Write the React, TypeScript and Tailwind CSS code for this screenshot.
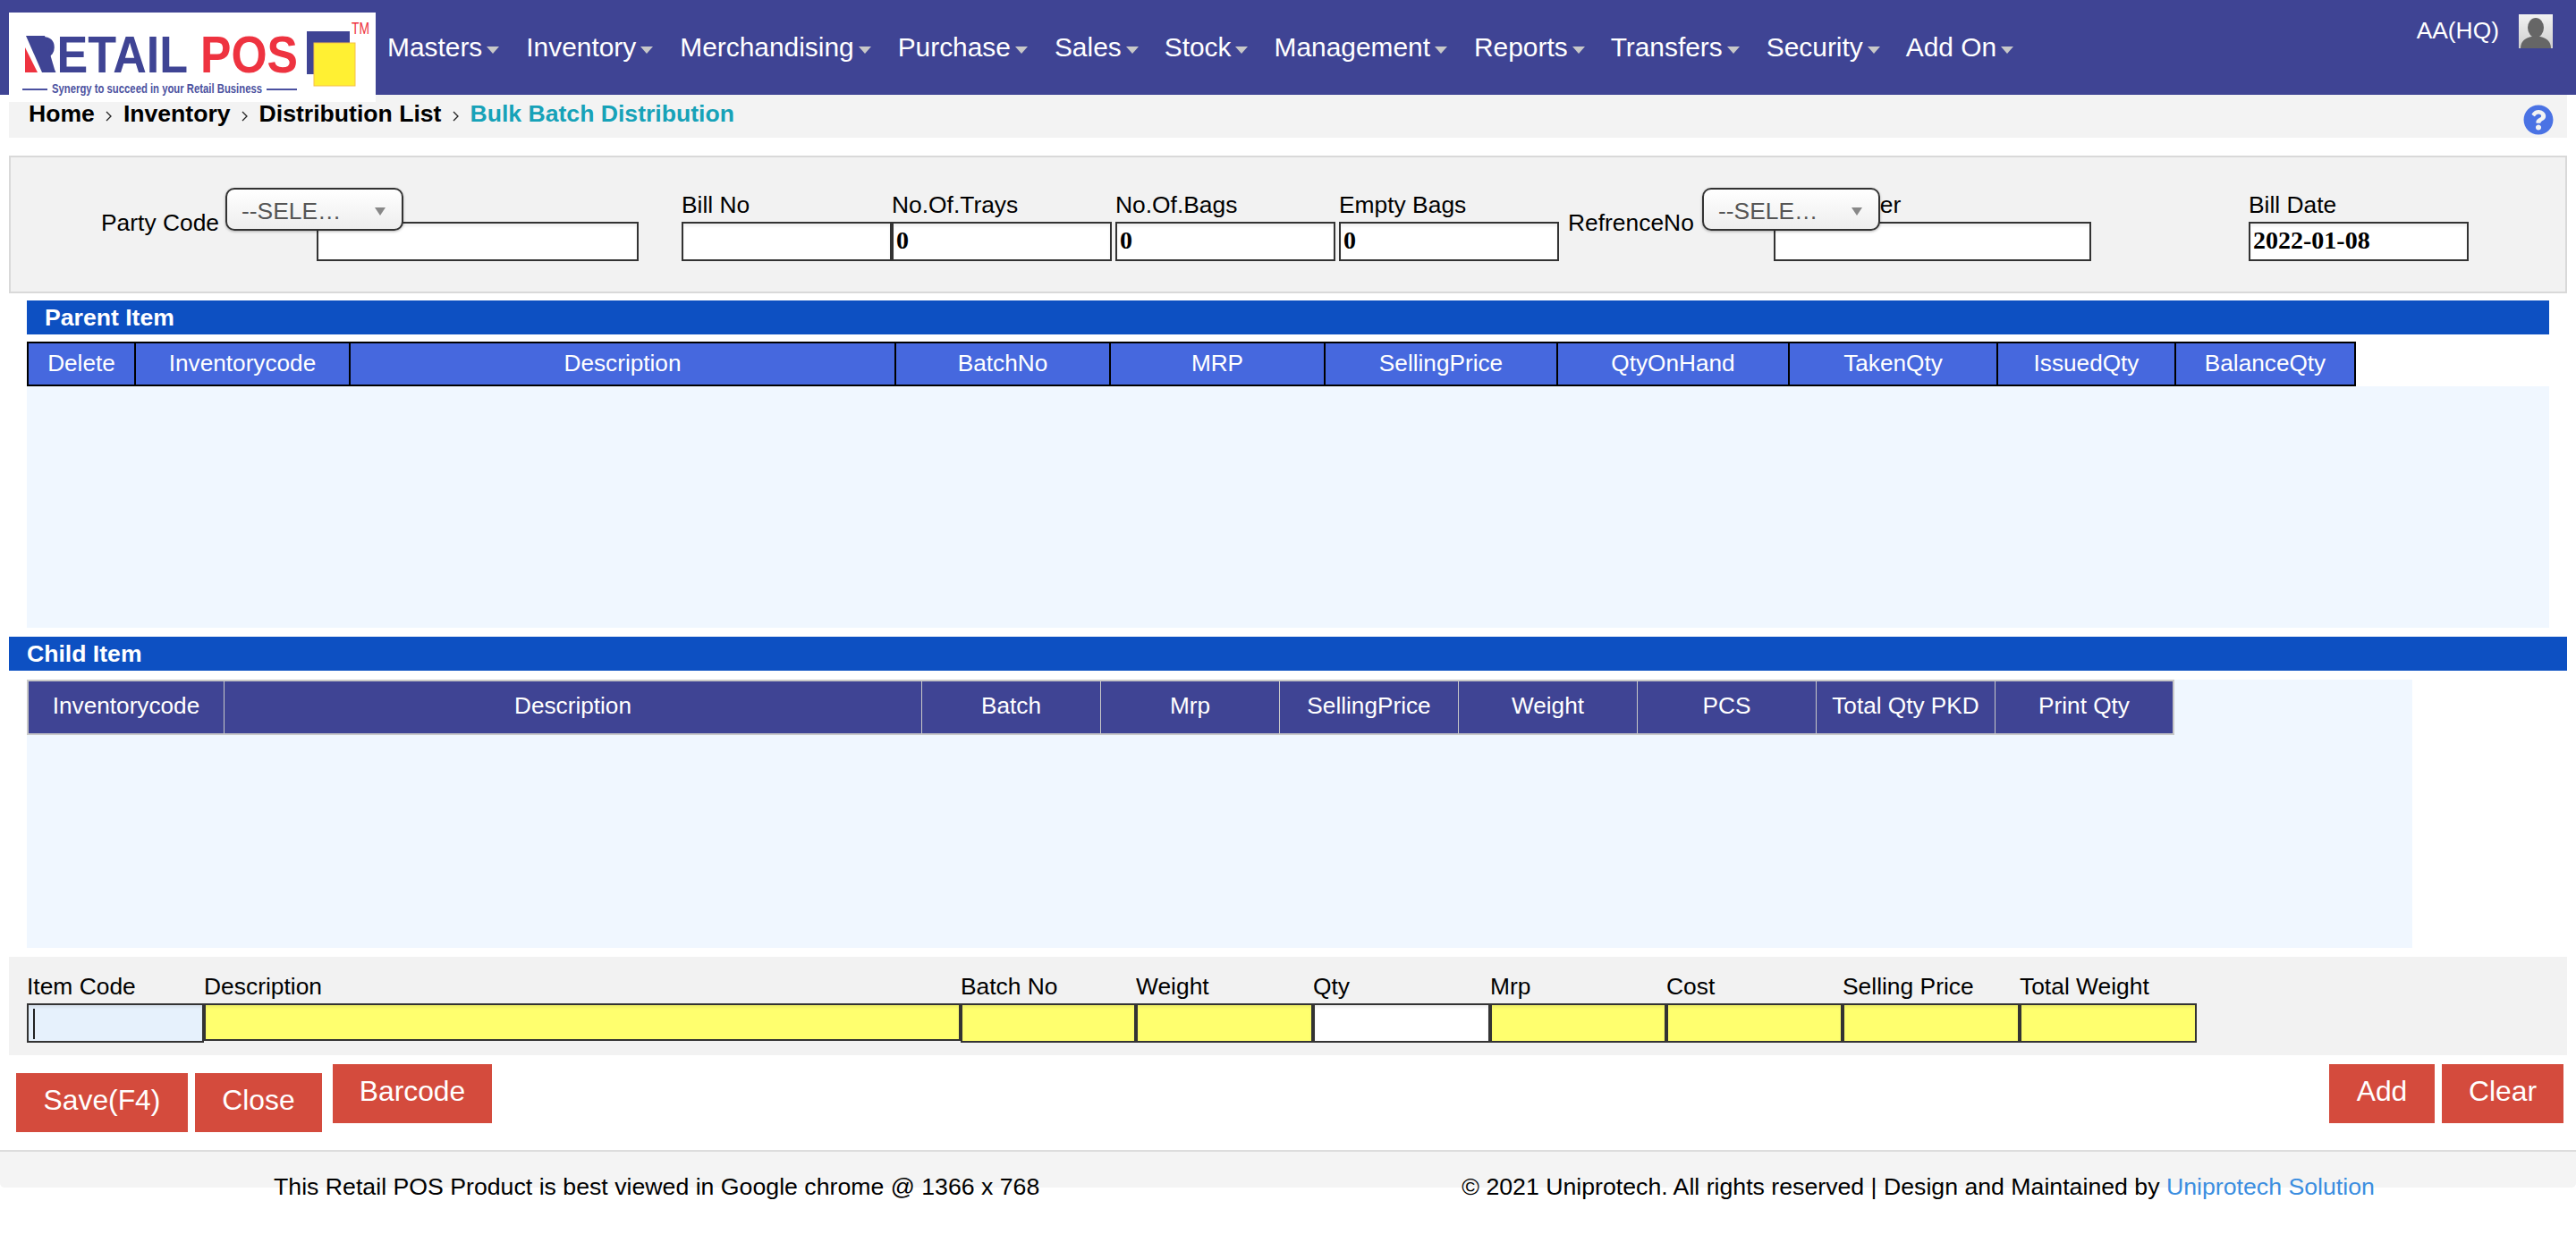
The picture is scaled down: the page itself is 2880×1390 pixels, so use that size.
import { FaQuestionCircle } from "react-icons/fa"

const navItems = [
  { label: "Masters", gap: "mr-[30px]" },
  { label: "Inventory", gap: "mr-[30px]" },
  { label: "Merchandising", gap: "mr-[30px]" },
  { label: "Purchase", gap: "mr-[30px]" },
  { label: "Sales", gap: "mr-[29px]" },
  { label: "Stock", gap: "mr-[29px]" },
  { label: "Management", gap: "mr-[30px]" },
  { label: "Reports", gap: "mr-[29px]" },
  { label: "Transfers", gap: "mr-[30px]" },
  { label: "Security", gap: "mr-[29px]" },
  { label: "Add On", gap: "" },
]

const parentCols = [
  { label: "Delete", w: "w-[118px]" },
  { label: "Inventorycode", w: "w-[240px]" },
  { label: "Description", w: "w-[610px]" },
  { label: "BatchNo", w: "w-[240px]" },
  { label: "MRP", w: "w-[240px]" },
  { label: "SellingPrice", w: "w-[260px]" },
  { label: "QtyOnHand", w: "w-[259px]" },
  { label: "TakenQty", w: "w-[233px]" },
  { label: "IssuedQty", w: "w-[199px]" },
  { label: "BalanceQty", w: "w-[201px]" },
]

const childCols = [
  { label: "Inventorycode", w: "w-[218px]" },
  { label: "Description", w: "w-[780px]" },
  { label: "Batch", w: "w-[200px]" },
  { label: "Mrp", w: "w-[200px]" },
  { label: "SellingPrice", w: "w-[200px]" },
  { label: "Weight", w: "w-[200px]" },
  { label: "PCS", w: "w-[200px]" },
  { label: "Total Qty PKD", w: "w-[200px]" },
  { label: "Print Qty", w: "w-[199px]" },
]

const itemFields = [
  { label: "Batch No", w: "w-[196px]", bg: "bg-[#ffff6e]" },
  { label: "Weight", w: "w-[198px]", bg: "bg-[#ffff6e]" },
  { label: "Qty", w: "w-[198px]", bg: "bg-white" },
  { label: "Mrp", w: "w-[197px]", bg: "bg-[#ffff6e]" },
  { label: "Cost", w: "w-[197px]", bg: "bg-[#ffff6e]" },
  { label: "Selling Price", w: "w-[198px]", bg: "bg-[#ffff6e]" },
  { label: "Total Weight", w: "w-[198px]", bg: "bg-[#ffff6e]" },
]

function Logo() {
  return (
    <div className="mt-[14px] h-[100px] w-[410px] shrink-0 bg-white">
      <svg width="410" height="100" viewBox="0 0 410 100">
        <text x="16" y="67" fontFamily="Liberation Sans" fontWeight="700" fontSize="58" fill="#3f4494" textLength="184" lengthAdjust="spacingAndGlyphs">RETAIL</text>
        {/* the R of the logo has a diagonal stem with a red wedge under it */}
        <polygon points="12,22 38,22 46,68 12,68" fill="#fff" />
        <polygon points="19,26 40,26 52,67 37,67" fill="#3f4494" />
        <polygon points="18,39 18,67 32,67" fill="#ee3340" />
        <text x="214" y="67" fontFamily="Liberation Sans" fontWeight="700" fontSize="58" fill="#ee3340" textLength="109" lengthAdjust="spacingAndGlyphs">POS</text>
        <rect x="333" y="21" width="48" height="48" fill="#3f4494" />
        <rect x="341" y="34" width="46" height="48" fill="#fff033" stroke="#f5c04a" strokeWidth="1" />
        <text x="383" y="24" fontFamily="Liberation Sans" fontWeight="400" fontSize="18" fill="#ee3340" textLength="20" lengthAdjust="spacingAndGlyphs">TM</text>
        <rect x="15" y="85" width="28" height="2" fill="#4b51a0" />
        <text x="48" y="90" fontFamily="Liberation Sans" fontWeight="700" fontSize="15" fill="#4b51a0" textLength="235" lengthAdjust="spacingAndGlyphs">Synergy to succeed in your Retail Business</text>
        <rect x="288" y="85" width="34" height="2" fill="#4b51a0" />
      </svg>
    </div>
  )
}

function Chevron() {
  return (
    <svg width="7" height="12" viewBox="0 0 7 12" className="mx-[12.5px] mt-[4px] shrink-0" fill="none" stroke="#222" strokeWidth="1.3">
      <path d="M1 1l5 5-5 5" />
    </svg>
  )
}

function Field({ label, width, value, inputClass = "bg-white" }: { label: string; width: string; value?: string; inputClass?: string }) {
  return (
    <div className={`${width} shrink-0`}>
      <div className="h-[37px] whitespace-nowrap leading-[36px] text-black">{label}</div>
      <input
        readOnly
        value={value ?? ""}
        className={`box-border block h-[44px] w-full border-2 border-[#333] pb-[3px] pl-[3px] font-['Liberation_Serif'] text-[28px] font-bold text-black shadow-[inset_0_3px_3px_rgba(0,0,0,0.06)] outline-none ${inputClass}`}
      />
    </div>
  )
}

function SelectBox() {
  return (
    <div className="absolute left-0 top-[-1px] z-10 box-border flex h-[48px] w-[199px] items-center justify-between rounded-[10px] border-2 border-[#333] bg-gradient-to-b from-white to-[#eeeeee] pl-[16px] pr-[18px] pt-[5px] text-[#555] shadow-[0_1px_3px_rgba(0,0,0,0.3)]">
      <span>--SELE…</span>
      <span className="h-0 w-0 border-x-[6px] border-t-[9px] border-x-transparent border-t-[#888]" />
    </div>
  )
}

function RedButton({ label, className }: { label: string; className: string }) {
  return (
    <button className={`box-border h-[66px] shrink-0 bg-[#d44b3d] pb-[6px] text-center text-[31.8px] leading-[60px] text-white ${className}`}>
      {label}
    </button>
  )
}

export default function App() {
  return (
    <div className="h-[1390px] overflow-hidden bg-white font-['Liberation_Sans',Arial,sans-serif] text-[26.4px]">
      {/* Top navigation */}
      <header className="relative z-10 flex h-[106px] items-start bg-[#3f4494] pl-[10px] text-white">
        <Logo />
        <nav className="ml-[13px] flex h-[106px] items-center">
          {navItems.map((item) => (
            <div key={item.label} className={`flex items-center text-[29.9px] leading-[36px] ${item.gap}`}>
              <span>{item.label}</span>
              <span className="ml-[5px] mt-[6px] h-0 w-0 border-x-[7.5px] border-t-[8px] border-x-transparent border-t-[#c8c8c8]" />
            </div>
          ))}
        </nav>
        <div className="ml-auto flex items-start pr-[26px] pt-[16px]">
          <span className="leading-[36px]">AA(HQ)</span>
          <div className="ml-[22px] h-[38px] w-[38px] bg-gradient-to-b from-[#f2f2f2] to-[#cfcfcf]">
            <svg width="38" height="38" viewBox="0 0 38 38">
              <ellipse cx="19" cy="15" rx="9" ry="11" fill="#666" />
              <path d="M2 38c0-9 7-12 12-13h10c5 1 12 4 12 13z" fill="#666" />
            </svg>
          </div>
        </div>
      </header>

      {/* Breadcrumb */}
      <div className="mx-[10px] flex h-[48px] items-center bg-[#f3f3f3] pl-[22px] pr-[15px] text-[26.6px] font-bold">
        <span className="mb-[4px] flex items-center">
          <span className="text-black">Home</span>
          <Chevron />
          <span className="text-black">Inventory</span>
          <Chevron />
          <span className="text-black">Distribution List</span>
          <Chevron />
          <span className="text-[#17a2b8]">Bulk Batch Distribution</span>
        </span>
        <FaQuestionCircle className="ml-auto mt-[8px] text-[#4a72e4]" size={34} />
      </div>

      {/* Bill details */}
      <div className="mx-[10px] mt-[20px] box-border flex h-[154px] items-start border-2 border-[#d9d9d9] bg-[#f2f2f2] pl-[101px] pt-[35px]">
        <div className="mt-[20px] w-[139px] shrink-0 leading-[36px] text-black">Party Code</div>
        <div className="relative w-[462px] shrink-0">
          <SelectBox />
          <Field label="" width="ml-[102px] w-[360px]" />
        </div>
        <Field label="Bill No" width="ml-[48px] w-[235px]" />
        <Field label="No.Of.Trays" width="w-[246px]" value="0" />
        <Field label="No.Of.Bags" width="ml-[4px] w-[246px]" value="0" />
        <Field label="Empty Bags" width="ml-[4px] w-[246px]" value="0" />
        <div className="ml-[10px] mt-[20px] w-[150px] shrink-0 leading-[36px] text-black">RefrenceNo</div>
        <div className="relative w-[435px] shrink-0">
          <SelectBox />
          <Field label="Ref Number" width="ml-[80px] w-[355px]" />
        </div>
        <Field label="Bill Date" width="ml-[176px] w-[246px]" value="2022-01-08" />
      </div>

      {/* Parent item */}
      <div className="mx-[30px] mt-[8px] h-[38px] bg-[#0d50c2] pl-[20px] text-[26.6px] font-bold leading-[38px] text-white">Parent Item</div>
      <div className="mx-[30px] mt-[8px] h-[320px]">
        <div className="box-border flex h-[50px] w-fit border-2 border-black bg-[#4668de] text-[26.2px] text-white">
          {parentCols.map((col, i) => (
            <div key={col.label} className={`${col.w} box-border text-center leading-[44px] ${i > 0 ? "border-l-2 border-black" : ""}`}>
              {col.label}
            </div>
          ))}
        </div>
        <div className="h-[270px] bg-[#f0f7ff]" />
      </div>

      {/* Child item */}
      <div className="mx-[10px] mt-[10px] h-[38px] bg-[#0d50c2] pl-[20px] text-[26.6px] font-bold leading-[38px] text-white">Child Item</div>
      <div className="ml-[30px] mt-[10px] h-[300px] w-[2667px] bg-[#f0f7ff]">
        <div className="box-border flex h-[62px] w-fit border-2 border-[#c8c8c8] bg-[#3f4494] text-[26.2px] text-white">
          {childCols.map((col, i) => (
            <div key={col.label} className={`${col.w} box-border text-center leading-[54px] ${i > 0 ? "border-l border-[#c8c8c8]" : ""}`}>
              {col.label}
            </div>
          ))}
        </div>
      </div>

      {/* Item entry */}
      <div className="mx-[10px] mt-[10px] flex h-[110px] items-start bg-[#f2f2f2] pl-[20px] pt-[15px]">
        <div className="relative w-[198px] shrink-0">
          <Field label="Item Code" width="w-[198px]" inputClass="bg-[#e6f1fc]" />
          <span className="absolute left-[7px] top-[43px] h-[34px] w-[2px] bg-[#222]" />
        </div>
        <div className="w-[846px] shrink-0">
          <div className="h-[37px] leading-[36px] text-black">Description</div>
          <div className="box-border h-[42px] border-2 border-[#333] bg-[#ffff6e] shadow-[inset_0_3px_3px_rgba(0,0,0,0.06)]" />
        </div>
        {itemFields.map((field) => (
          <Field key={field.label} label={field.label} width={field.w} inputClass={field.bg} />
        ))}
      </div>

      {/* Actions */}
      <div className="mt-[10px] flex h-[76px] items-start pl-[18px] pr-[14px]">
        <RedButton label="Save(F4)" className="mt-[10px] w-[192px]" />
        <RedButton label="Close" className="ml-[8px] mt-[10px] w-[142px]" />
        <RedButton label="Barcode" className="ml-[12px] w-[178px]" />
        <RedButton label="Add" className="ml-auto w-[118px]" />
        <RedButton label="Clear" className="ml-[8px] w-[136px]" />
      </div>

      {/* Footer */}
      <footer className="mt-[20px] box-border h-[42px] rounded-b-[5px] border-t-2 border-[#dddddd] bg-[#f4f4f4] text-[26.7px] text-black">
        <div className="flex whitespace-nowrap pl-[306px] pt-[21px] leading-[36px]">
          <span>This Retail POS Product is best viewed in Google chrome @ 1366 x 768</span>
          <span className="ml-[472px]">
            © 2021 Uniprotech. All rights reserved | Design and Maintained by <span className="text-[#3b8ee0]">Uniprotech Solution</span>
          </span>
        </div>
      </footer>
    </div>
  )
}
